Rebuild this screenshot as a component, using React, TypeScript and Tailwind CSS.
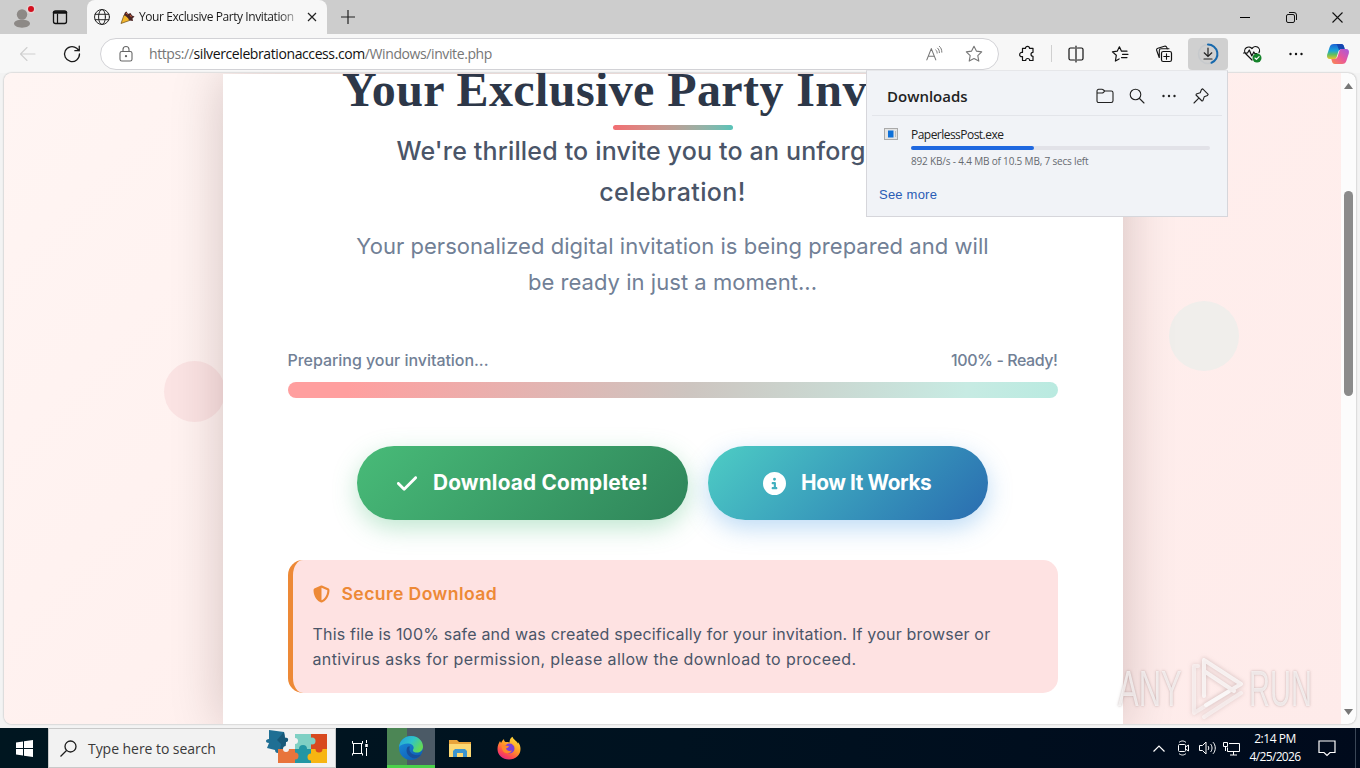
import React from 'react';
import { FaCheck, FaCircleInfo, FaShieldHalved } from 'react-icons/fa6';

const uiFont = "font-['Open_Sans','Noto_Sans',sans-serif]";

interface IconProps {
  size?: number;
  className?: string;
  children: React.ReactNode;
}

const Icon: React.FC<IconProps> = ({ size = 20, className = '', children }) => (
  <svg
    width={size}
    height={size}
    viewBox="0 0 20 20"
    fill="none"
    stroke="currentColor"
    strokeWidth="1.1"
    strokeLinecap="round"
    strokeLinejoin="round"
    className={`shrink-0 ${className}`}
  >
    {children}
  </svg>
);

const TabStrip: React.FC = () => (
  <div className="flex h-[34px] shrink-0 items-stretch bg-[#cdcdcd]">
    <div className="flex w-[87px] items-center rounded-br-lg pl-3">
      <svg width="24" height="24" viewBox="0 0 24 24" className="shrink-0">
        <circle cx="10" cy="9.500" r="5.200" fill="#8d8986" />
        <path d="M2 18.500c0-2.300 3.500-3.700 8-3.700s8 1.400 8 3.700-3.500 4.200-8 4.200-8-1.900-8-4.200z" fill="#8d8986" />
        <circle cx="19" cy="4" r="4.500" fill="#e3d3d3" />
        <circle cx="19" cy="4" r="3" fill="#d3101f" />
      </svg>
      <Icon size={20} className="ml-[14px] text-[#111]">
        <rect x="3.500" y="4" width="13" height="12.500" rx="2" strokeWidth="1.300" />
        <path d="M4 5.500h12" strokeWidth="2.400" />
        <path d="M7.500 7v9" strokeWidth="1.200" />
      </Icon>
    </div>
    <div className="flex w-[240px] items-center rounded-t-lg bg-[#f7f7f7] pl-[6px]">
      <Icon size={18} className="text-[#222]">
        <circle cx="10" cy="10" r="8.300" />
        <ellipse cx="10" cy="10" rx="3.800" ry="8.300" />
        <path d="M2.400 7h15.200M2.400 13h15.200" />
      </Icon>
      <svg width="15" height="15" viewBox="0 0 15 15" className="ml-[9px] shrink-0">
        <path d="M1 13.500 4 5c2 .5 5 3 5.500 5.500z" fill="#f2b62c" stroke="#6b4a12" strokeWidth=".7" />
        <path d="M4 5c.5-2 1-3 2.500-3.500L8 4l2.500-1L12 5.500l2.500 1-2 2 .5 2.500-3.500-.5C8.500 8 6.500 6 4 5z" fill="#4b2626" />
        <path d="m6 3 1.500 1.500M10 5l1.500 2" stroke="#d05c3d" />
      </svg>
      <span className="ml-1 w-[158px] overflow-hidden text-[12px] tracking-[-0.42px] whitespace-nowrap text-[#1b1b1b] [mask-image:linear-gradient(90deg,#000_88%,#0004)]">
        Your Exclusive Party Invitation
      </span>
      <svg width="10" height="10" viewBox="0 0 10 10" stroke="#222" strokeWidth="1.200" className="ml-[10px] shrink-0">
        <path d="m1 1 8 8M9 1 1 9" />
      </svg>
    </div>
    <div className="flex flex-1 items-center justify-between">
      <svg width="14" height="14" viewBox="0 0 14 14" stroke="#222" strokeWidth="1.200" className="ml-[14px]">
        <path d="M7 0v14M0 7h14" />
      </svg>
      <div className="flex">
        <div className="flex w-[46px] items-center justify-center">
          <span className="h-px w-[10px] bg-black" />
        </div>
        <div className="flex w-[46px] items-center justify-center">
          <svg width="11" height="11" viewBox="0 0 11 11" fill="none" stroke="#111">
            <rect x=".5" y="2.500" width="8" height="8" rx="1.500" />
            <path d="M3 .5h5A2.500 2.500 0 0 1 10.500 3v5" />
          </svg>
        </div>
        <div className="flex w-[46px] items-center justify-center">
          <svg width="11" height="11" viewBox="0 0 11 11" stroke="#111" strokeWidth="1.100">
            <path d="m.5.5 10 10m0-10-10 10" />
          </svg>
        </div>
      </div>
    </div>
  </div>
);

const Cell: React.FC<{ children: React.ReactNode; className?: string }> = ({ children, className = '' }) => (
  <div className={`flex h-8 w-10 shrink-0 items-center justify-center rounded ${className}`}>{children}</div>
);

const Copilot: React.FC = () => (
  <svg width="24" height="22" viewBox="0 0 24 22" className="shrink-0">
    <defs>
      <linearGradient id="cpA" x1="0" y1="0" x2="0" y2="1">
        <stop offset="0" stopColor="#1b62d6" />
        <stop offset=".45" stopColor="#1aa5d8" />
        <stop offset=".7" stopColor="#5fbf62" />
        <stop offset="1" stopColor="#e8c52c" />
      </linearGradient>
      <linearGradient id="cpB" x1="1" y1="0" x2="0" y2="1">
        <stop offset="0" stopColor="#a45ae0" />
        <stop offset=".5" stopColor="#e8569b" />
        <stop offset="1" stopColor="#fb8a4e" />
      </linearGradient>
    </defs>
    <path d="M8 1h7c2 0 2.500 1 3 2.500l.7 2.500h-3c-2 0-3 1-3.500 3l-1.500 5c-.5 1.500-1 2-2.500 2H4c-2.500 0-3.500-2-2.800-4.500L3.500 4.500C4.200 2 5.500 1 8 1z" fill="url(#cpA)" />
    <path d="M16 21H9c-2 0-2.500-1-3-2.500L5.300 16h3c2 0 3-1 3.500-3l1.500-5c.5-1.500 1-2 2.500-2H20c2.500 0 3.500 2 2.800 4.500l-2.300 7C19.800 20 18.500 21 16 21z" fill="url(#cpB)" />
    <path d="M15 1c2 0 2.500 1 3 2.500l.7 2.500h-3c-1.200 0-2 .4-2.600 1.200L11.500 3C11.200 1.800 10.500 1 9.500 1z" fill="#1546b0" />
  </svg>
);

const Toolbar: React.FC = () => (
  <div className="flex h-[39px] shrink-0 items-center bg-[#f7f7f7]">
    <div className="flex w-[100px] items-center pl-[18px]">
      <Icon className="text-[#cfcfcf]">
        <path d="M17 10H3m6-6.500L2.500 10 9 16.500" />
      </Icon>
      <Icon size={22} className="ml-[23px] text-[#1a1a1a]">
        <path d="M16.800 10a6.800 6.800 0 1 1-2.500-5.200L16.500 7M16.600 2.800V7h-4" strokeWidth="1.200" />
      </Icon>
    </div>
    <div className="flex h-8 w-[899px] items-center rounded-full border border-[#d2d2d6] bg-white pr-[14px] pl-[15px]">
      <Icon className="text-[#666]">
        <rect x="4" y="7.500" width="12" height="9.500" rx="1.800" />
        <path d="M7 7.300V5.500a3 3 0 0 1 6 0v1.800" />
        <circle cx="10" cy="12.200" r=".6" fill="currentColor" />
      </Icon>
      <span className="ml-[13px] text-[14px] tracking-[-0.4px] whitespace-nowrap text-[#767676]">
        https://<span className="text-[#111]">silvercelebrationaccess.com</span>/Windows/invite.php
      </span>
      <Icon size={18} className="ml-auto text-[#777]">
        <path d="m2 16.500 5-12.500 5 12.500M3.700 12.500h6.600" strokeWidth="1.200" />
        <path d="M12 5.500c1 .8 1.500 2 1.500 3.500M14 3.500c1.500 1.200 2 3 2 5M16 1.500c2 1.700 2.700 4 2.700 6.500" />
      </Icon>
      <Icon size={20} className="ml-[21px] text-[#777]">
        <path d="m10 2.200 2.400 4.900 5.300.8-3.900 3.800 1 5.400L10 14.500l-4.800 2.600 1-5.400-3.900-3.800 5.300-.8z" />
      </Icon>
    </div>
    <div className="flex flex-1 items-center pl-2 text-[#111]">
      <Cell>
        <Icon size={20}>
          <path d="M5.500 4.300h3a2 2 0 1 1 4 0h3.500v4a2 2 0 1 0 0 4v4.200h-3.300a2 2 0 0 0-4 0H5.500V12.500a2 2 0 0 1-2.800-2.200 2 2 0 0 1 2.800-1.800z" strokeWidth="1.200" />
        </Icon>
      </Cell>
      <span className="mx-[4px] h-[17px] w-px bg-[#d0d0d0]" />
      <Cell>
        <Icon size={20}>
          <path d="M8.500 4h-4A1.500 1.500 0 0 0 3 5.500v9A1.500 1.500 0 0 0 4.500 16h4M11.500 4h4A1.500 1.500 0 0 1 17 5.500v9a1.500 1.500 0 0 1-1.500 1.500h-4M10 2v16" strokeWidth="1.200" />
        </Icon>
      </Cell>
      <Cell className="ml-1">
        <Icon size={20}>
          <path d="M5.400 17 6.300 11.300 2.400 7.900l4.800-.7L9.400 2.800l2.100 4.400H17M5.400 17l3.700-2.100M12.500 10.300H18M11.500 13.600H17" strokeWidth="1.200" />
        </Icon>
      </Cell>
      <Cell className="ml-1">
        <Icon size={20}>
          <rect x="7.500" y="7.500" width="10" height="10" rx="1.800" strokeWidth="1.200" />
          <path d="M12.500 9.800v5.400M9.800 12.500h5.400M5.200 13.500 2.700 6.500c-.4-1 .2-2 1.200-2.300l6.500-2c1-.3 2 .2 2.400 1.200l.5 1.600M5.300 13.500V6.500c0-1 .8-1.800 1.800-1.800H15" strokeWidth="1.100" />
        </Icon>
      </Cell>
      <Cell className="ml-1 bg-[#d0d0d0]">
        <svg width="24" height="24" viewBox="0 0 24 24" fill="none" strokeLinecap="round">
          <circle cx="12" cy="12" r="9.500" stroke="#c6c9cc" strokeWidth="1.500" />
          <path d="M12 2.500a9.500 9.500 0 0 1 3.500 18.300" stroke="#1769ad" strokeWidth="2" />
          <path d="M12 6v8.500m-3.800-3.700L12 14.500l3.800-3.700M8 17h8" stroke="#222" strokeWidth="1.200" />
        </svg>
      </Cell>
      <Cell className="ml-1">
        <Icon size={20}>
          <path d="m10 16-6.500-6.500A4 4 0 0 1 10 4.600a4 4 0 0 1 7 4M1.500 9h4l1.800-3 2.500 6 2-4 1 1.500h2" strokeWidth="1.200" />
          <circle cx="15" cy="14" r="4.500" fill="#15832b" stroke="none" />
          <path d="m13 14 1.400 1.400 2.700-2.800" stroke="#fff" />
        </Icon>
      </Cell>
      <Cell className="ml-1">
        <Icon size={20}>
          <g fill="currentColor" stroke="none">
            <circle cx="4.500" cy="10" r="1.200" />
            <circle cx="10" cy="10" r="1.200" />
            <circle cx="15.500" cy="10" r="1.200" />
          </g>
        </Icon>
      </Cell>
      <div className="ml-[10px]">
        <Copilot />
      </div>
    </div>
  </div>
);

const DownloadsPanel: React.FC = () => (
  <div className="absolute top-[70px] left-[866px] z-20 h-[147px] w-[362px] border border-[#d6d6db] border-t-[#e6e7ea] bg-[#f1f3f7] px-[5px]">
    <div className="flex h-[45px] items-center border-b border-[#e3e5ea] pr-[11px] pl-[15px] text-[#222]">
      <h2 className="flex-1 pt-[5px] text-[15px] leading-5 font-semibold tracking-[0px]">Downloads</h2>
      <div className="flex items-center gap-3 pt-[6px]">
        <Icon>
          <path d="M2 6.500V5c0-1 .7-1.700 1.700-1.700H7c.5 0 .9.2 1.200.5L9.700 5h6.600c1 0 1.700.7 1.700 1.700v8.100c0 1-.7 1.700-1.700 1.700H3.700c-1 0-1.700-.7-1.700-1.700zM2 7h5c.6 0 1-.2 1.300-.5L9.700 5" />
        </Icon>
        <Icon>
          <circle cx="8.500" cy="8.500" r="5.300" />
          <path d="m12.500 12.500 4.500 4.500" />
        </Icon>
        <Icon>
          <g fill="currentColor" stroke="none">
            <circle cx="4.500" cy="10" r="1.200" />
            <circle cx="10" cy="10" r="1.200" />
            <circle cx="15.500" cy="10" r="1.200" />
          </g>
        </Icon>
        <Icon>
          <path d="m11.700 2.800 5.500 5.500-.7 1.200-3.300 1.300-1.300 3.900-.9.300-6-6 .3-.9 3.900-1.300 1.300-3.300zM7.800 12.200 3 17" />
        </Icon>
      </div>
    </div>
    <div className="flex pt-[9px] pl-3">
      <svg width="14" height="12" viewBox="0 0 14 12" className="mt-[3px] shrink-0">
        <rect x=".5" y=".5" width="13" height="11" fill="#e4e4e4" stroke="#aaa" />
        <rect x="4" y="2.500" width="5.500" height="7" fill="#0e70d8" />
        <path d="M11.500 3v6" stroke="#bbb" />
      </svg>
      <div className="ml-[13px] w-[299px]">
        <p className="text-[12px] leading-[20px] tracking-[-0.53px] text-[#222]">PaperlessPost.exe</p>
        <div className="mt-[1px] h-1 rounded-full bg-[#e2e2e8]">
          <div className="h-1 w-[123px] rounded-full bg-[#1f68e0]" />
        </div>
        <p className="mt-1 text-[10px] leading-[15px] tracking-[-0.18px] whitespace-nowrap text-[#666a70]">
          892 KB/s - 4.4 MB of 10.5 MB, 7 secs left
        </p>
      </div>
    </div>
    <p className="mt-4 pl-[7px] font-['Liberation_Sans',sans-serif] text-[13px] leading-5 tracking-[0.22px] text-[#2a5cb5]">
      See more
    </p>
  </div>
);

const InvitationCard: React.FC = () => (
  <main className="relative mx-auto flex h-[651px] w-[900px] flex-col items-center bg-white px-[65px] font-['Inter',sans-serif] shadow-[0_0_50px_rgba(40,10,10,0.2)]">
    <h1 className="-mt-[8px] h-[59px] font-['Liberation_Serif',serif] text-[48px] leading-[48px] font-bold tracking-[0.4px] whitespace-nowrap text-[#2d3748]">
      Your Exclusive Party Invitation
    </h1>
    <div className="h-[5px] w-[120px] shrink-0 rounded-full bg-linear-to-r from-[#f26d72] to-[#57c3b8]" />
    <p className="mt-px text-center text-[25px] leading-[41px] font-medium tracking-[0.17px] whitespace-nowrap text-[#4a5568]">
      We're thrilled to invite you to an unforgettable
      <br />
      <span className="tracking-[0.4px]">celebration!</span>
    </p>
    <p className="mt-[15px] text-center text-[22px] leading-[36px] tracking-[0.04px] whitespace-nowrap text-[#718096]">
      Your personalized digital invitation is being prepared and will
      <br />
      be ready in just a moment...
    </p>
    <div className="mt-12 flex w-full justify-between text-[16px] leading-6 font-medium whitespace-nowrap text-[#718096]">
      <span className="tracking-[-0.04px]">Preparing your invitation...</span>
      <span className="tracking-[-0.43px]">100% - Ready!</span>
    </div>
    <div className="mt-[10px] h-4 w-full shrink-0 rounded-full bg-[linear-gradient(100deg,#ff9f9f_8%,#cdc5c0_52%,#c7ebe3_88%,#b9eae0)]" />
    <div className="mt-12 flex gap-5 text-[20.8px] font-bold whitespace-nowrap text-white">
      <button className="flex h-[74px] w-[331px] items-center rounded-full bg-linear-135 from-[#48bb78] to-[#2f855a] pl-[39px] shadow-[0_8px_25px_rgba(72,187,120,0.35)]">
        <FaCheck className="h-[23px] w-[22px]" />
        <span className="ml-[15px] tracking-[0.18px]">Download Complete!</span>
      </button>
      <button className="flex h-[74px] w-[280px] items-center rounded-full bg-linear-135 from-[#4ecdc4] to-[#2b6cb0] pl-[55px] shadow-[0_8px_25px_rgba(66,153,225,0.35)]">
        <FaCircleInfo className="h-[23px] w-[23px]" />
        <span className="ml-[15px] tracking-[-0.4px]">How It Works</span>
      </button>
    </div>
    <section className="mt-10 h-[133px] w-full shrink-0 rounded-[15px] border-l-[5px] border-[#ed8936] bg-[#fee2e2] px-5 pt-5">
      <h3 className="flex items-center text-[17.6px] leading-7 font-semibold whitespace-nowrap text-[#ed8936]">
        <FaShieldHalved className="h-[18px] w-[17px]" />
        <span className="ml-3 tracking-[0.4px]">Secure Download</span>
      </h3>
      <p className="mt-[13.5px] text-[16px] leading-[25px] whitespace-nowrap text-[#4a5568]">
        <span className="tracking-[0.19px]">
          This file is 100% safe and was created specifically for your invitation. If your browser or
        </span>
        <br />
        <span className="tracking-[0.39px]">antivirus asks for permission, please allow the download to proceed.</span>
      </p>
    </section>
  </main>
);

const Watermark: React.FC = () => (
  <div className="absolute top-[584px] left-[1114px] z-10 flex h-[64px] items-center font-['Liberation_Sans',sans-serif] text-[50px] leading-none text-white/70 [text-shadow:0_0_3px_rgba(130,100,100,0.5)]">
    <span className="w-[72px]">
      <span className="inline-block origin-left scale-x-[0.62]">ANY</span>
    </span>
    <svg width="56" height="64" viewBox="0 0 56 64" fill="none" strokeLinejoin="round" strokeLinecap="round" className="shrink-0 drop-shadow-[0_0_2px_rgba(130,100,100,0.5)]">
      <path d="M14 3v36m0-36 37 24-35 21M14 14l30 20" stroke="#fff" strokeOpacity=".7" strokeWidth="4" />
      <path d="M8 9H4v47l34-21M14 60l37-24" stroke="#fff" strokeOpacity=".5" strokeWidth="4" />
    </svg>
    <span className="ml-[3px] w-[66px]">
      <span className="inline-block origin-left scale-x-[0.58]">RUN</span>
    </span>
  </div>
);

const Viewport: React.FC = () => (
  <div className="flex h-[655px] shrink-0 bg-[#f3f3f3] px-1 pb-1">
    <div className="relative flex h-[651px] w-full overflow-hidden rounded-lg bg-[#fcfcfc] shadow-[0_0_2px_rgba(0,0,0,0.35)]">
      <div className="relative w-[1337px] overflow-hidden bg-[linear-gradient(135deg,#fff5f3,#ffefed_55%,#feebea)] pt-px">
        <span className="absolute top-[288px] left-[160px] h-[61px] w-[61px] rounded-full bg-[#fbe3e3]" />
        <span className="absolute top-[228px] left-[1165px] h-[70px] w-[70px] rounded-full bg-[#f0eeeb]" />
        <InvitationCard />
      </div>
      <div className="flex w-[15px] flex-col items-center pt-[10px] pb-[9px]">
        <svg width="9" height="6" viewBox="0 0 9 6" fill="#777">
          <path d="M4.500 0 9 6H0z" />
        </svg>
        <div className="mt-[102px] h-[205px] w-[9px] rounded-full bg-[#8b8b8b]" />
        <svg width="9" height="6" viewBox="0 0 9 6" fill="#777" className="mt-auto">
          <path d="M4.500 6 9 0H0z" />
        </svg>
      </div>
      <Watermark />
    </div>
  </div>
);

const PuzzleArt: React.FC = () => (
  <svg width="64" height="38" viewBox="0 0 64 38" className="shrink-0">
    <path d="M4 1 19 3l1 6c4-1 4 4 1 4l-1 7-6 1c1 4-4 4-4 0l-8-2 2-5c-4 0-4-4 0-4z" fill="#1f6f94" />
    <path d="M19 3l1 6c4-1 4 4 1 4l-1 7-5 1 1-6-4-4z" fill="#185878" />
    <rect x="30" y="5" width="17" height="15" fill="#7fd0c4" />
    <rect x="46" y="5" width="16" height="15" fill="#d8491f" />
    <rect x="13" y="20" width="18" height="14" fill="#e8743b" />
    <rect x="30" y="20" width="18" height="14" fill="#2396a3" />
    <rect x="46" y="20" width="16" height="14" fill="#f7b512" />
    <circle cx="38" cy="20" r="4" fill="#2396a3" />
    <circle cx="47" cy="12" r="3.500" fill="#7fd0c4" />
    <circle cx="54" cy="20" r="3.500" fill="#d8491f" />
    <circle cx="30" cy="27" r="3.500" fill="#e8743b" />
    <circle cx="46" cy="28" r="3.500" fill="#f7b512" />
    <circle cx="30" cy="12" r="3" fill="#f2f2f2" />
    <circle cx="21" cy="20" r="3" fill="#f2f2f2" />
  </svg>
);

const EdgeLogo: React.FC = () => (
  <svg width="26" height="26" viewBox="0 0 26 26">
    <defs>
      <linearGradient id="edgeTop" x1="0" y1="0" x2="1" y2=".5">
        <stop offset="0" stopColor="#249fdb" />
        <stop offset=".55" stopColor="#2fc3c9" />
        <stop offset="1" stopColor="#63d957" />
      </linearGradient>
      <linearGradient id="edgeBody" x1="0" y1="0" x2=".7" y2="1">
        <stop offset="0" stopColor="#1b8fdc" />
        <stop offset="1" stopColor="#0f5fb5" />
      </linearGradient>
    </defs>
    <circle cx="13" cy="13" r="12" fill="url(#edgeBody)" />
    <path d="M1 12C2 5 7 1 13 1c7 0 12 5 12 10.500 0 4-3 6-6 6-3.500 0-4.500-1.500-4-2.700.8-1.300.8-2 .5-3C15 10 13 8.500 10 8.500c-4 0-7.500 1.500-9 3.500z" fill="url(#edgeTop)" />
    <path d="M9.500 12c-2 3-1 9 5 11 4 .8 7-1 8.500-3.500-3 1.200-9 1-11-3-.8-1.500-.7-3.500 0-5-1 0-2 .1-2.500.5z" fill="#174f9c" />
  </svg>
);

const FirefoxLogo: React.FC = () => (
  <svg width="24" height="24" viewBox="0 0 24 24">
    <defs>
      <linearGradient id="ffx" x1=".8" y1="0" x2=".2" y2="1">
        <stop offset="0" stopColor="#ffe03d" />
        <stop offset=".45" stopColor="#ff9a26" />
        <stop offset=".75" stopColor="#ff4a4f" />
        <stop offset="1" stopColor="#e1218a" />
      </linearGradient>
    </defs>
    <path d="M3 5c.3 1 .7 1.500 1.200 1.800C5 5 6 4 7 3c0 1.500.5 2.500 1.500 3 2-.3 3.500 0 4 .5C12.500 4 13.500 2 15.500.8 16 3 18 4 19.500 5.500c.7.700 1 1.500 1.200 2 .3-.5.3-1 .1-1.500C23 8.500 23.500 10.500 23.500 13c0 6-5 10.500-11.500 10.500S.5 19 .5 13C.5 10 1.500 7.500 3 5z" fill="url(#ffx)" />
    <circle cx="12.500" cy="12.500" r="5" fill="#7a3fd8" />
    <path d="M4.500 9c3 0 4 1 7.500 1-.5 1.500-2 2-3 2.500.5 2 3 3 6 2-2 4-8 3.500-9.500-.5-.5-1.500-1-3-1-5z" fill="#ff8a2a" />
  </svg>
);

const Taskbar: React.FC = () => (
  <footer className="flex h-10 shrink-0 items-stretch bg-linear-to-r from-[#001620] via-[#001220] via-50% to-[#000a1c] text-white">
    <div className="flex w-12 items-center justify-center">
      <svg width="17" height="17" viewBox="0 0 17 17" fill="#fff">
        <path d="M0 2.400 7 1.400V8H0zM8 1.200 17 0v8H8zM0 9h7v6.600l-7-1zM8 9h9v8l-9-1.200z" />
      </svg>
    </div>
    <div className="flex w-[288px] items-center border border-[#c9c9c9] bg-[#f2f2f2] pl-[11px]">
      <svg width="17" height="17" viewBox="0 0 17 17" fill="none" stroke="#1d1d1d" strokeWidth="1.300">
        <circle cx="10.500" cy="6.500" r="5.500" />
        <path d="m6.500 10.500-6 6" />
      </svg>
      <span className="ml-[11px] flex-1 text-[14px] tracking-[-0.05px] whitespace-nowrap text-[#3a3a3a]">Type here to search</span>
      <div className="mr-[6px]">
        <PuzzleArt />
      </div>
    </div>
    <div className="flex w-[51px] items-center justify-center pr-[3px]">
      <svg width="16" height="16" viewBox="0 0 16 16" fill="none" stroke="#fff">
        <path d="M.5 1v2.500h10V1M.5 15.500v-2h10v2M1.500 3.500v10M9.500 3.500v10M14.500 0v3M14.500 8v8" />
        <path d="M14.500 4v3" strokeWidth="2.500" />
      </svg>
    </div>
    <div className="flex w-12 items-center justify-center border-b-[3px] border-[#4bd14a] bg-[linear-gradient(90deg,#4c8655_20px,#4b5a66_20px)] pt-[2px]">
      <EdgeLogo />
    </div>
    <div className="flex w-[49px] items-center justify-center">
      <svg width="22" height="19" viewBox="0 0 22 19">
        <path d="M0 1h8l2 2h12v15H0z" fill="#e8a33a" />
        <path d="M0 5h22v13H0z" fill="#fcd873" />
        <path d="M4 18v-6l2-2h10l2 2v6h-4v-4H8v4z" fill="#3c95cf" />
      </svg>
    </div>
    <div className="flex w-[49px] items-center justify-center">
      <FirefoxLogo />
    </div>
    <div className="ml-auto flex items-center">
      <svg width="12" height="7" viewBox="0 0 12 7" fill="none" stroke="#fff" strokeWidth="1.200">
        <path d="m.5 6.500 5.500-5.500 5.500 5.500" />
      </svg>
      <svg width="14" height="16" viewBox="0 0 14 16" fill="none" stroke="#fff" className="ml-3">
        <rect x="1.500" y="4.500" width="7" height="7" rx="1" />
        <path d="m8.500 7 3-2v6l-3-2M2 2.500C4 .5 7 .5 9 2.500M2 13.500c2 2 5 2 7 0" />
      </svg>
      <svg width="17" height="14" viewBox="0 0 17 14" fill="none" stroke="#fff" className="ml-2">
        <path d="M.5 4.500h3l3.500-3.500v12L3.500 9.500h-3zM9 5c1 1 1 3 0 4M11.500 3c2 2 2 6 0 8M14 1.200c3 3 3 8.600 0 11.600" />
      </svg>
      <svg width="17" height="15" viewBox="0 0 17 15" fill="none" stroke="#fff" className="ml-[7px]">
        <path d="M6 2.500h10.500v8H4.500v-4M10.500 10.500v3.500M7 14h7M.5 1.500h4v4h-4zM2.500 5.500V10" />
      </svg>
      <div className="ml-[3px] w-[64px] text-center text-[12px] leading-[18px] tracking-[-0.45px] whitespace-nowrap">
        <p>2:14 PM</p>
        <p className="tracking-[-0.65px]">4/25/2026</p>
      </div>
      <svg width="18" height="17" viewBox="0 0 18 17" fill="none" stroke="#fff" strokeWidth="1.200" className="ml-[11px]">
        <path d="M1 1h16v11.500h-5L9 15.500l-3-3H1z" />
      </svg>
      <span className="ml-[19px] h-10 w-px bg-[#3a4656]" />
      <span className="w-1" />
    </div>
  </footer>
);

const App: React.FC = () => (
  <div className={`relative flex h-[768px] w-[1360px] flex-col overflow-hidden ${uiFont}`}>
    <TabStrip />
    <Toolbar />
    <Viewport />
    <Taskbar />
    <DownloadsPanel />
  </div>
);

export default App;
